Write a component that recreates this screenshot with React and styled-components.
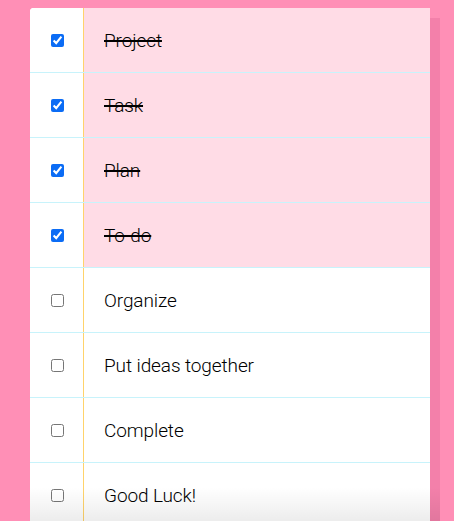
import React from 'react';
import styled, { createGlobalStyle } from 'styled-components';

const GlobalStyle = createGlobalStyle`
  html, body {
    margin: 0;
    padding: 0;
    background: #ff8fb6;
    overflow: hidden;
  }
  body {
    font-family: Roboto, "Liberation Sans", sans-serif;
  }
`;

const Page = styled.div`
  height: 521px;
  padding: 8px 24px 0 30px;
  position: relative;
  overflow: hidden;
`;

const List = styled.ul`
  list-style: none;
  margin: 0;
  padding: 0;
  width: 400px;
  background: #fff;
  border-radius: 4px 0 0 0;
  box-shadow: 10px 10px 0 rgba(160, 30, 90, 0.13);
  overflow: hidden;
`;

const Row = styled.li`
  display: flex;
  height: 64px;
  border-bottom: 1px solid #c8f3fb;
  background: #fff;
`;

const CheckCell = styled.div`
  width: 53px;
  flex: none;
  display: flex;
  align-items: center;
  justify-content: center;
  border-right: 1px solid #ffd36b;
  background: #fff;

  input {
    margin: 0 0 0 1px;
    width: 13px;
    height: 13px;
    accent-color: #0b6cf5;
  }
`;

const Label = styled.div`
  flex: 1;
  display: flex;
  align-items: center;
  padding-left: 20px;
  font-size: 19px;
  font-weight: 300;
  letter-spacing: -0.1px;
  color: #000;
  background: ${p => (p.done ? '#ffdce6' : '#fff')};
  text-decoration: ${p => (p.done ? 'line-through' : 'none')};
  text-decoration-thickness: 1.5px;
`;

const Fade = styled.div`
  position: absolute;
  left: 30px;
  width: 410px;
  bottom: 0;
  height: 42px;
  background: linear-gradient(rgba(0, 0, 0, 0), rgba(0, 0, 0, 0.09));
  pointer-events: none;
`;

const todos = [
  { text: 'Project', done: true },
  { text: 'Task', done: true },
  { text: 'Plan', done: true },
  { text: 'To-do', done: true },
  { text: 'Organize', done: false },
  { text: 'Put ideas together', done: false },
  { text: 'Complete', done: false },
  { text: 'Good Luck!', done: false },
];

export default function App() {
  return (
    <Page>
      <GlobalStyle />
      <List>
        {todos.map(todo => (
          <Row key={todo.text}>
            <CheckCell>
              <input type="checkbox" defaultChecked={todo.done} />
            </CheckCell>
            <Label done={todo.done}>{todo.text}</Label>
          </Row>
        ))}
      </List>
      <Fade />
    </Page>
  );
}
